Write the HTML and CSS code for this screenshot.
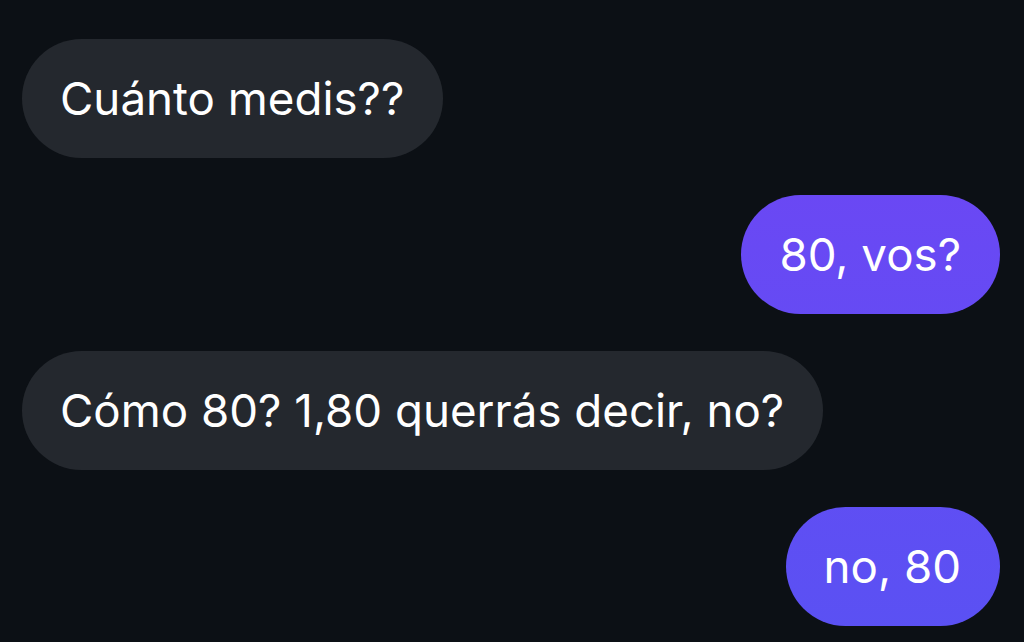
FILE: index.html
```html
<!DOCTYPE html>
<html lang="es">
<head>
	<meta charset="utf-8">
	<title>Chat</title>
	<link rel="stylesheet" href="styles.css">
</head>
<body>
	<div class="chat">
		<div class="msg them">Cuánto medis??</div>
		<div class="msg me">80, vos?</div>
		<div class="msg them">Cómo 80? 1,80 querrás decir, no?</div>
		<div class="msg me">no, 80</div>
	</div>
</body>
</html>
```

FILE: styles.css
```css
html, body {
	margin: 0;
	height: 100%;
}

body {
	background-color: #0c1015;
	font-family: Inter, "Noto Sans", sans-serif;
	color: #fff;
	overflow: hidden;
}

.chat {
	display: flex;
	flex-direction: column;
	gap: 37px;
	padding: 39px 24px 0 22px;
}

.msg {
	box-sizing: border-box;
	height: 119px;
	padding: 0 39px 0 38px;
	border-radius: 60px;
	font-size: 45.7px;
	line-height: 119px;
	white-space: nowrap;
}

.them {
	align-self: flex-start;
	background-color: #24282e;
}

.me {
	align-self: flex-end;
	background: linear-gradient(180deg, #7a3ff6 0%, #6a48f4 30%, #5a51f3 100%) fixed;
}
```
